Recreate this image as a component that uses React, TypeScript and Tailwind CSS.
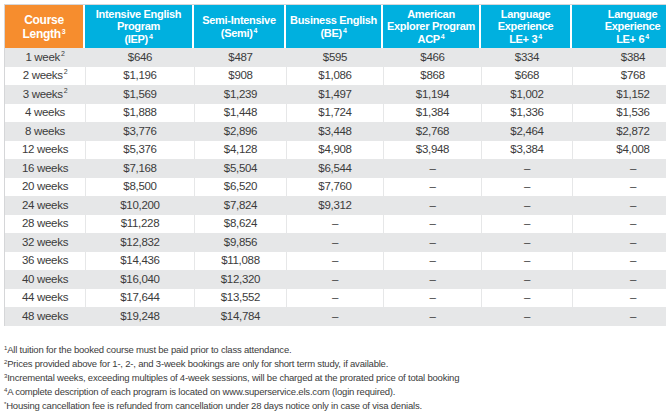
const font = { fontFamily: '"Liberation Sans", Arial, sans-serif' };

type Col = { lines: string[]; sup?: string; width: string };

const cols: Col[] = [
  { lines: ["Intensive English", "Program", "(IEP)"], sup: "4", width: "w-[109px]" },
  { lines: ["Semi-Intensive", "(Semi)"], sup: "4", width: "w-[92px]" },
  { lines: ["Business English", "(BE)"], sup: "4", width: "w-[97px]" },
  { lines: ["American", "Explorer Program", "ACP"], sup: "4", width: "w-[98px]" },
  { lines: ["Language", "Experience", "LE+ 3"], sup: "4", width: "w-[91px]" },
  { lines: ["Language", "Experience", "LE+ 6"], sup: "4", width: "w-[121px]" },
];

const rows: { label: string; sup?: string; prices: string[] }[] = [
  { label: "1 week", sup: "2", prices: ["$646", "$487", "$595", "$466", "$334", "$384"] },
  { label: "2 weeks", sup: "2", prices: ["$1,196", "$908", "$1,086", "$868", "$668", "$768"] },
  { label: "3 weeks", sup: "2", prices: ["$1,569", "$1,239", "$1,497", "$1,194", "$1,002", "$1,152"] },
  { label: "4 weeks", prices: ["$1,888", "$1,448", "$1,724", "$1,384", "$1,336", "$1,536"] },
  { label: "8 weeks", prices: ["$3,776", "$2,896", "$3,448", "$2,768", "$2,464", "$2,872"] },
  { label: "12 weeks", prices: ["$5,376", "$4,128", "$4,908", "$3,948", "$3,384", "$4,008"] },
  { label: "16 weeks", prices: ["$7,168", "$5,504", "$6,544", "–", "–", "–"] },
  { label: "20 weeks", prices: ["$8,500", "$6,520", "$7,760", "–", "–", "–"] },
  { label: "24 weeks", prices: ["$10,200", "$7,824", "$9,312", "–", "–", "–"] },
  { label: "28 weeks", prices: ["$11,228", "$8,624", "–", "–", "–", "–"] },
  { label: "32 weeks", prices: ["$12,832", "$9,856", "–", "–", "–", "–"] },
  { label: "36 weeks", prices: ["$14,436", "$11,088", "–", "–", "–", "–"] },
  { label: "40 weeks", prices: ["$16,040", "$12,320", "–", "–", "–", "–"] },
  { label: "44 weeks", prices: ["$17,644", "$13,552", "–", "–", "–", "–"] },
  { label: "48 weeks", prices: ["$19,248", "$14,784", "–", "–", "–", "–"] },
];

const notes = [
  ["1", "All tuition for the booked course must be paid prior to class attendance."],
  ["2", "Prices provided above for 1-, 2-, and 3-week bookings are only for short term study, if available."],
  ["3", "Incremental weeks, exceeding multiples of 4-week sessions, will be charged at the prorated price of total booking"],
  ["4", "A complete description of each program is located on www.superservice.els.com (login required)."],
  ["*", "Housing cancellation fee is refunded from cancellation under 28 days notice only in case of visa denials."],
];

function Sup({ children }: { children: React.ReactNode }) {
  return <sup className="ml-[1px] text-[7px]">{children}</sup>;
}

export default function App() {
  return (
    <div className="w-[666px] h-[419px] overflow-hidden bg-white text-[#3b3b3b]" style={font}>
      <div className="pl-[4px] pt-[4px]">
        <div className="w-[704px] border-t border-l border-[#d5d6d8]">
          {/* Header */}
          <div className="flex h-[43px] text-white font-bold text-[11px] leading-[12.5px] tracking-[-0.3px]">
            <div className="w-[80px] flex flex-col items-center justify-center bg-[#f68d2e] border-r-2 border-white text-[12px] leading-[14px]">
              <span>Course</span>
              <span>
                Length<Sup>3</Sup>
              </span>
            </div>
            {cols.map((c, i) => (
              <div
                key={i}
                className={`${c.width} flex flex-col items-center justify-center bg-[#00b0df] ${
                  i < cols.length - 1 ? "border-r-2 border-white" : ""
                }`}
              >
                {c.lines.map((l, j) => (
                  <span key={j}>
                    {l}
                    {j === c.lines.length - 1 && <Sup>{c.sup}</Sup>}
                  </span>
                ))}
              </div>
            ))}
          </div>

          {/* Body */}
          {rows.map((r, i) => (
            <div
              key={r.label}
              className={`flex h-[18.53px] items-center text-[11.5px] tracking-[-0.3px] ${
                i % 2 === 0 ? "bg-[#e6e7e8]" : "bg-white"
              }`}
            >
              <div className="w-[80px] h-full flex items-center justify-center">
                {r.label}
                {r.sup && <Sup>{r.sup}</Sup>}
              </div>
              {r.prices.map((p, j) => (
                <div
                  key={j}
                  className={`${cols[j].width} h-full flex items-center justify-center border-l border-[#e6e7e8]`}
                >
                  {p}
                </div>
              ))}
            </div>
          ))}
        </div>

        {/* Footnotes */}
        <div className="mt-[17px] text-[9.5px] leading-[14px] tracking-[-0.2px]">
          {notes.map(([s, t]) => (
            <div key={s} className="whitespace-nowrap">
              <sup className="text-[6px]">{s}</sup>
              {t}
            </div>
          ))}
        </div>
      </div>
    </div>
  );
}
